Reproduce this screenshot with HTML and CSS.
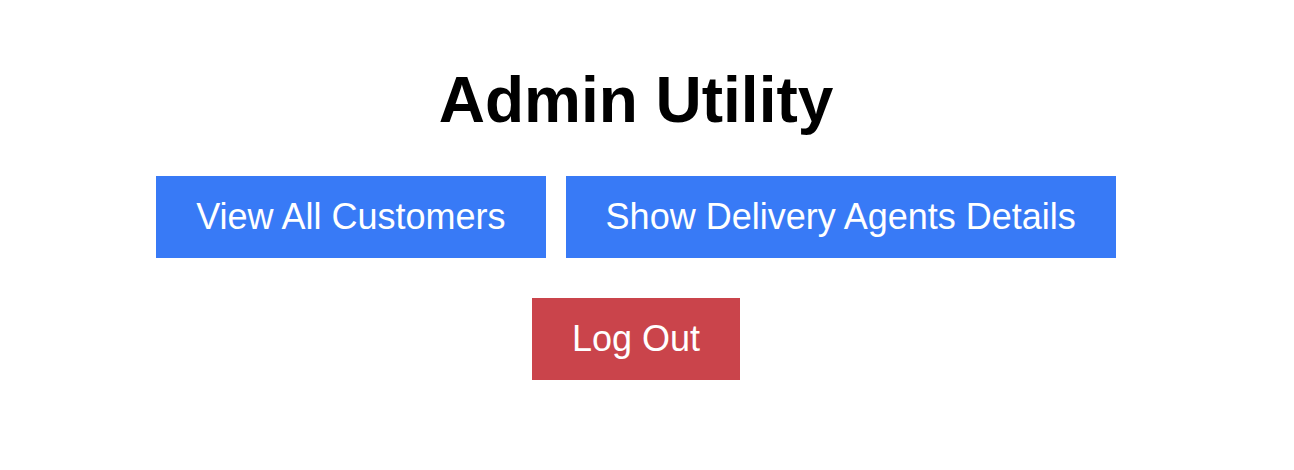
FILE: index.html
```html
<!DOCTYPE html>
<html>
<head>
<meta charset="utf-8">
<link rel="stylesheet" href="styles.css">
</head>
<body>
<main class="page">
  <h1 class="title">Admin Utility</h1>
  <div class="row">
    <button class="btn btn-blue">View All Customers</button>
    <button class="btn btn-blue">Show Delivery Agents Details</button>
  </div>
  <div class="row">
    <button class="btn btn-red">Log Out</button>
  </div>
</main>
</body>
</html>
```
FILE: styles.css
```css
html, body {
  margin: 0;
  padding: 0;
  background: #ffffff;
}
.page {
  font-family: "Liberation Sans", Arial, sans-serif;
  display: flex;
  flex-direction: column;
  align-items: center;
  padding-top: 64px;
  padding-right: 22px;
  gap: 40px;
}
.title {
  margin: 0;
  font-size: 64px;
  font-weight: bold;
  line-height: 72px;
  color: #000;
}
.row {
  display: flex;
  gap: 20px;
  justify-content: center;
}
.btn {
  font-family: "Liberation Sans", Arial, sans-serif;
  font-size: 36px;
  line-height: 42px;
  height: 82px;
  padding: 0 40px;
  border: none;
  border-radius: 0;
  color: #ffffff;
  cursor: pointer;
}
.btn-blue {
  background: #387af6;
}
.btn-red {
  background: #ca444b;
}
```
